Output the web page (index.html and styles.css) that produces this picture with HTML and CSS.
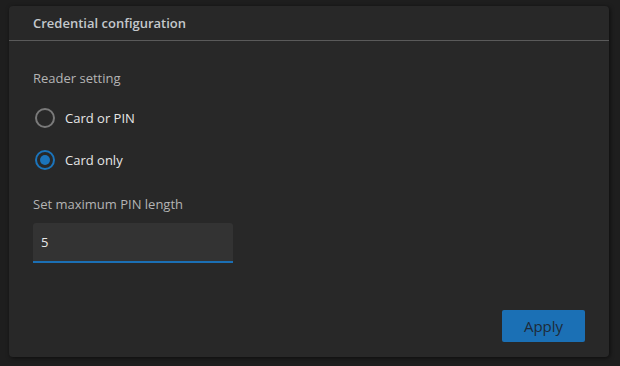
FILE: index.html
```html
<!DOCTYPE html>
<html>
<head>
	<meta charset="utf-8">
	<title>Credential configuration</title>
	<link rel="stylesheet" href="styles.css">
</head>
<body>
	<div class="card">
		<div class="card-header">Credential configuration</div>
		<div class="card-body">
			<div class="label">Reader setting</div>
			<label class="radio">
				<input type="radio" name="reader">
				<span class="mark"></span>
				<span class="radio-text">Card or PIN</span>
			</label>
			<label class="radio">
				<input type="radio" name="reader" checked>
				<span class="mark"></span>
				<span class="radio-text">Card only</span>
			</label>
			<div class="label pin-label">Set maximum PIN length</div>
			<input class="field" type="text" value="5">
		</div>
		<div class="card-footer">
			<button class="btn">Apply</button>
		</div>
	</div>
</body>
</html>
```

FILE: styles.css
```css
*{margin:0;padding:0;box-sizing:border-box;}
body{
	background:#1e1e1e;
	font-family:"Open Sans","Noto Sans",sans-serif;
	padding:6px 11px 8px 9px;
	height:366px;
}
.card{
	width:600px;
	height:351px;
	background:#282828;
	border-radius:4px;
	box-shadow:1px 1px 4px rgba(0,0,0,.6);
	display:flex;
	flex-direction:column;
}
.card-header{
	height:35px;
	padding:0 24px;
	line-height:34px;
	font-size:13px;
	font-weight:600;
	color:#c4c8cc;
	border-bottom:1px solid #5a5a5a;
}
.card-body{
	padding:28px 24px 0;
	flex:1;
}
.label{
	font-size:13px;
	color:#b4b4b4;
	line-height:18px;
}
.radio{
	display:flex;
	align-items:center;
	height:20px;
	margin-top:21px;
	cursor:pointer;
}
.radio + .radio{margin-top:22px;}
.radio input{display:none;}
.mark{
	width:20px;
	height:20px;
	border:2px solid #7a7a7a;
	border-radius:50%;
	margin-left:2px;
	position:relative;
}
.radio input:checked + .mark{
	border-color:#1b74bb;
}
.radio input:checked + .mark:after{
	content:"";
	position:absolute;
	left:3px;
	top:3px;
	width:10px;
	height:10px;
	border-radius:50%;
	background:#1b74bb;
}
.radio-text{
	margin-left:10px;
	font-size:13px;
	color:#e6e6e6;
}
.pin-label{margin-top:25px;}
.field{
	display:block;
	margin-top:10px;
	width:200px;
	height:40px;
	border:0;
	border-bottom:2px solid #1b6fb4;
	border-radius:3px 3px 0 0;
	background:#333333;
	color:#e8e8e8;
	font-family:inherit;
	font-size:13px;
	padding:0 8px;
	outline:none;
}
.card-footer{
	display:flex;
	justify-content:flex-end;
	padding:0 24px 15px;
}
.btn{
	width:83px;
	height:32px;
	border:0;
	border-radius:2px;
	background:#1b70b5;
	color:#1e2a38;
	font-family:inherit;
	font-size:15px;
	cursor:pointer;
}
```
